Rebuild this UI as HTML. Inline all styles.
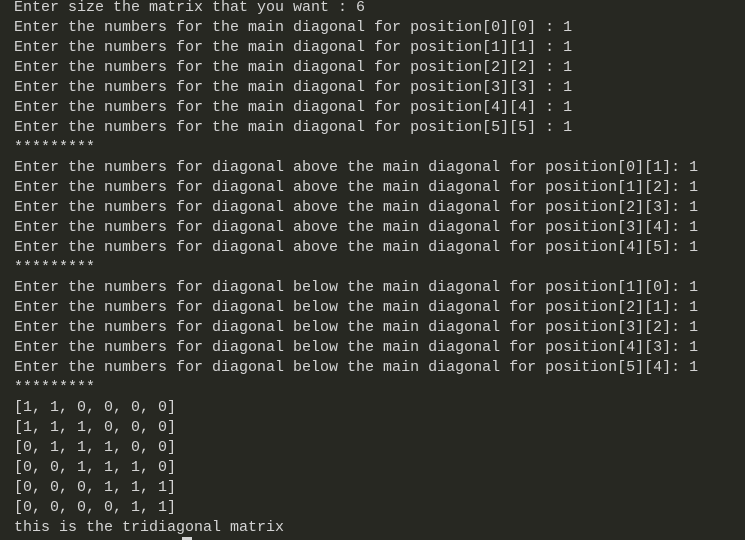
<!DOCTYPE html>
<html><head><style>
html,body{margin:0;padding:0;background:#272822;width:745px;height:540px;overflow:hidden}
pre{margin:0;position:absolute;left:14px;top:-2px;font-family:"Liberation Mono",monospace;font-size:15px;line-height:20px;color:#d4d4d4;letter-spacing:0}
.cur{position:absolute;left:182px;top:537px;width:10px;height:3px;background:#d4d4d4}
</style></head><body>
<pre>Enter size the matrix that you want : 6
Enter the numbers for the main diagonal for position[0][0] : 1
Enter the numbers for the main diagonal for position[1][1] : 1
Enter the numbers for the main diagonal for position[2][2] : 1
Enter the numbers for the main diagonal for position[3][3] : 1
Enter the numbers for the main diagonal for position[4][4] : 1
Enter the numbers for the main diagonal for position[5][5] : 1
*********
Enter the numbers for diagonal above the main diagonal for position[0][1]: 1
Enter the numbers for diagonal above the main diagonal for position[1][2]: 1
Enter the numbers for diagonal above the main diagonal for position[2][3]: 1
Enter the numbers for diagonal above the main diagonal for position[3][4]: 1
Enter the numbers for diagonal above the main diagonal for position[4][5]: 1
*********
Enter the numbers for diagonal below the main diagonal for position[1][0]: 1
Enter the numbers for diagonal below the main diagonal for position[2][1]: 1
Enter the numbers for diagonal below the main diagonal for position[3][2]: 1
Enter the numbers for diagonal below the main diagonal for position[4][3]: 1
Enter the numbers for diagonal below the main diagonal for position[5][4]: 1
*********
[1, 1, 0, 0, 0, 0]
[1, 1, 1, 0, 0, 0]
[0, 1, 1, 1, 0, 0]
[0, 0, 1, 1, 1, 0]
[0, 0, 0, 1, 1, 1]
[0, 0, 0, 0, 1, 1]
this is the tridiagonal matrix</pre>
<div class="cur"></div>
</body></html>
